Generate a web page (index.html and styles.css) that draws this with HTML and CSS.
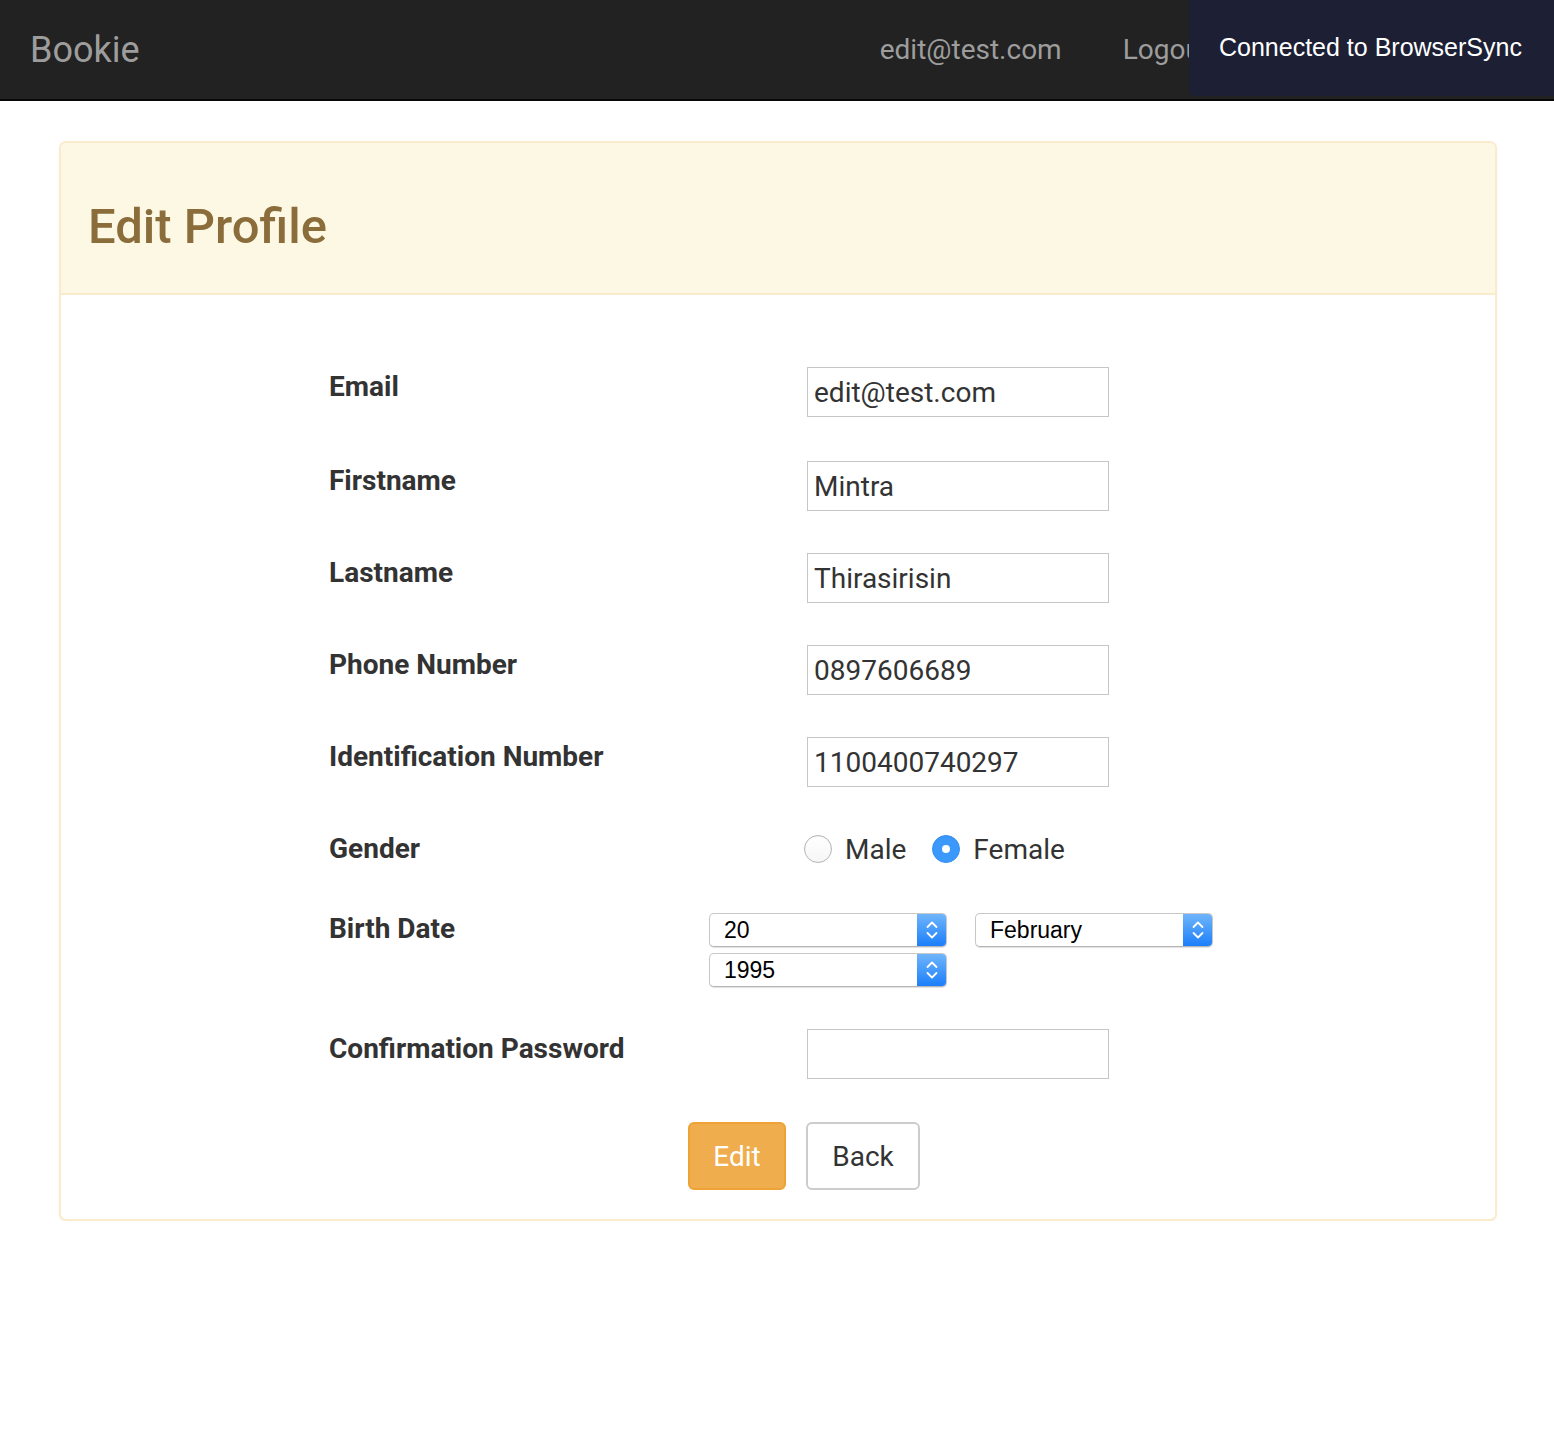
FILE: index.html
```html
<!DOCTYPE html>
<html lang="en">
<head>
<meta charset="utf-8">
<title>Bookie - Edit Profile</title>
<link rel="stylesheet" href="styles.css">
</head>
<body>
<nav class="navbar">
  <a class="brand" href="#">Bookie</a>
  <div class="nav-links">
    <a href="#" class="nav-link">edit@test.com</a>
    <a href="#" class="nav-link">Logout</a>
  </div>
</nav>
<div class="bs-notify">Connected to BrowserSync</div>

<main class="container">
  <section class="panel">
    <header class="panel-heading">
      <h1 class="panel-title">Edit Profile</h1>
    </header>
    <div class="panel-body">
      <form class="form">
        <div class="row row-first">
          <label class="label">Email</label>
          <input class="input" type="text" value="edit@test.com">
        </div>
        <div class="row">
          <label class="label">Firstname</label>
          <input class="input" type="text" value="Mintra">
        </div>
        <div class="row">
          <label class="label">Lastname</label>
          <input class="input" type="text" value="Thirasirisin">
        </div>
        <div class="row">
          <label class="label">Phone Number</label>
          <input class="input" type="text" value="0897606689">
        </div>
        <div class="row">
          <label class="label">Identification Number</label>
          <input class="input" type="text" value="1100400740297">
        </div>
        <div class="row">
          <label class="label">Gender</label>
          <div class="radios">
            <label class="radio-opt"><input class="radio" type="radio" name="g"> <span>Male</span></label>
            <label class="radio-opt"><input class="radio" type="radio" name="g" checked> <span>Female</span></label>
          </div>
        </div>
        <div class="row">
          <label class="label">Birth Date</label>
          <div class="dates">
            <div class="sel">
              <select class="sel-input"><option>20</option></select>
              <span class="sel-arrow"><svg width="14" height="22" viewBox="0 0 14 22"><path d="M2.5 8 L7 3.5 L11.5 8 M2.5 14 L7 18.5 L11.5 14" fill="none" stroke="#fff" stroke-width="1.8" stroke-linecap="round" stroke-linejoin="round"/></svg></span>
            </div>
            <div class="sel">
              <select class="sel-input"><option>February</option></select>
              <span class="sel-arrow"><svg width="14" height="22" viewBox="0 0 14 22"><path d="M2.5 8 L7 3.5 L11.5 8 M2.5 14 L7 18.5 L11.5 14" fill="none" stroke="#fff" stroke-width="1.8" stroke-linecap="round" stroke-linejoin="round"/></svg></span>
            </div>
            <div class="sel">
              <select class="sel-input"><option>1995</option></select>
              <span class="sel-arrow"><svg width="14" height="22" viewBox="0 0 14 22"><path d="M2.5 8 L7 3.5 L11.5 8 M2.5 14 L7 18.5 L11.5 14" fill="none" stroke="#fff" stroke-width="1.8" stroke-linecap="round" stroke-linejoin="round"/></svg></span>
            </div>
          </div>
        </div>
        <div class="row">
          <label class="label">Confirmation Password</label>
          <input class="input" type="password" value="">
        </div>
        <div class="actions">
          <button type="button" class="btn btn-warning">Edit</button>
          <button type="button" class="btn btn-default">Back</button>
        </div>
      </form>
    </div>
  </section>
</main>
</body>
</html>
```
FILE: styles.css
```css
* { box-sizing: border-box; }

html, body {
  margin: 0;
  padding: 0;
  background: #fff;
}

body {
  font-family: Roboto, "Noto Sans", sans-serif;
  color: #333;
}

/* Navbar */
.navbar {
  height: 101px;
  background: #222;
  border-bottom: 2px solid #080808;
  display: flex;
  align-items: center;
  padding-left: 30px;
}

.brand {
  font-size: 36px;
  color: #9d9d9d;
  text-decoration: none;
  line-height: 1;
}

.nav-links {
  margin-left: auto;
  display: flex;
  gap: 61px;
  padding-right: 344px;
}

.nav-link {
  font-size: 28px;
  color: #9d9d9d;
  text-decoration: none;
  line-height: 1;
  padding-top: 1px;
}

.bs-notify {
  position: fixed;
  top: 0;
  right: 0;
  width: 365px;
  height: 96px;
  background: #1d2035;
  color: #fff;
  font-family: "Liberation Sans", Arial, sans-serif;
  font-size: 25px;
  display: flex;
  align-items: center;
  padding-left: 30px;
  padding-bottom: 2px;
  border-bottom-left-radius: 6px;
}

/* Container / panel */
.container {
  padding: 40px 57px 0 59px;
}

.panel {
  border: 2px solid #faebcc;
  border-radius: 7px;
  box-shadow: 0 1px 2px rgba(0, 0, 0, 0.05);
  overflow: hidden;
}

.panel-heading {
  background: #fcf8e3;
  border-bottom: 2px solid #faebcc;
  padding: 57px 27px 40px;
}

.panel-title {
  margin: 0;
  font-size: 49px;
  font-weight: 500;
  line-height: 53px;
  color: #8a6d3b;
}

.panel-body {
  padding: 72px 0 29px 268px;
}

.form {
  display: flex;
  flex-direction: column;
  gap: 42px;
}

.row {
  display: grid;
  grid-template-columns: 478px auto;
  align-items: start;
}

.row-first {
  margin-bottom: 2px;
}

.label {
  font-size: 28px;
  font-weight: 700;
  line-height: 36px;
  margin-top: 2px;
  color: #333;
}

.input {
  width: 302px;
  height: 50px;
  border: 1px solid #c6c6c6;
  border-radius: 0;
  padding: 0 6px;
  font-family: Roboto, "Noto Sans", sans-serif;
  font-size: 28px;
  color: #333;
  background: #fff;
  outline: none;
}

/* Radios */
.radios {
  display: flex;
  align-items: center;
  gap: 26px;
  margin-left: -3px;
  height: 36px;
  margin-top: 2px;
}

.radio-opt {
  display: flex;
  align-items: center;
  gap: 13px;
  font-size: 28px;
  color: #333;
}

.radio {
  appearance: none;
  -webkit-appearance: none;
  margin: 0;
  width: 28px;
  height: 28px;
  border-radius: 50%;
  border: 1px solid #b4b4b4;
  background: linear-gradient(#fff, #f6f6f6);
  box-shadow: inset 0 1px 1px rgba(0, 0, 0, 0.04);
  position: relative;
}

.radio:checked {
  border-color: #3690f5;
  background: #3b99fc;
}

.radio:checked::after {
  content: "";
  position: absolute;
  left: 50%;
  top: 50%;
  width: 8px;
  height: 8px;
  margin: -4px 0 0 -4px;
  border-radius: 50%;
  background: #fff;
}

/* Selects */
.dates {
  display: flex;
  flex-wrap: wrap;
  width: 504px;
  column-gap: 28px;
  row-gap: 6px;
  margin-left: -98px;
  margin-top: 4px;
}

.sel {
  position: relative;
  width: 238px;
  height: 34px;
  border-radius: 5px;
  border: 1px solid #c8c8c8;
  border-bottom-color: #b5b5b5;
  box-shadow: 0 1px 1px rgba(0, 0, 0, 0.12);
  background: #fff;
  overflow: hidden;
}

.sel-input {
  appearance: none;
  -webkit-appearance: none;
  width: 100%;
  height: 100%;
  border: 0;
  background: transparent;
  font-family: "Liberation Sans", Arial, sans-serif;
  font-size: 23px;
  color: #000;
  padding: 0 0 0 14px;
  outline: none;
}

.sel-arrow {
  position: absolute;
  top: 0;
  right: 0;
  width: 29px;
  height: 100%;
  background: linear-gradient(#6fb5fb, #1c7ffa);
  display: flex;
  align-items: center;
  justify-content: center;
  pointer-events: none;
}

/* Buttons */
.actions {
  display: flex;
  gap: 20px;
  margin-left: 359px;
  margin-top: 1px;
}

.btn {
  height: 68px;
  border-radius: 6px;
  border: 2px solid;
  font-family: Roboto, "Noto Sans", sans-serif;
  font-size: 28px;
  cursor: pointer;
}

.btn-warning {
  width: 98px;
  padding: 0;
  background: #f0ad4e;
  border-color: #eea236;
  color: #fff;
}

.btn-default {
  width: 114px;
  padding: 0;
  background: #fff;
  border-color: #ccc;
  color: #333;
}
```
